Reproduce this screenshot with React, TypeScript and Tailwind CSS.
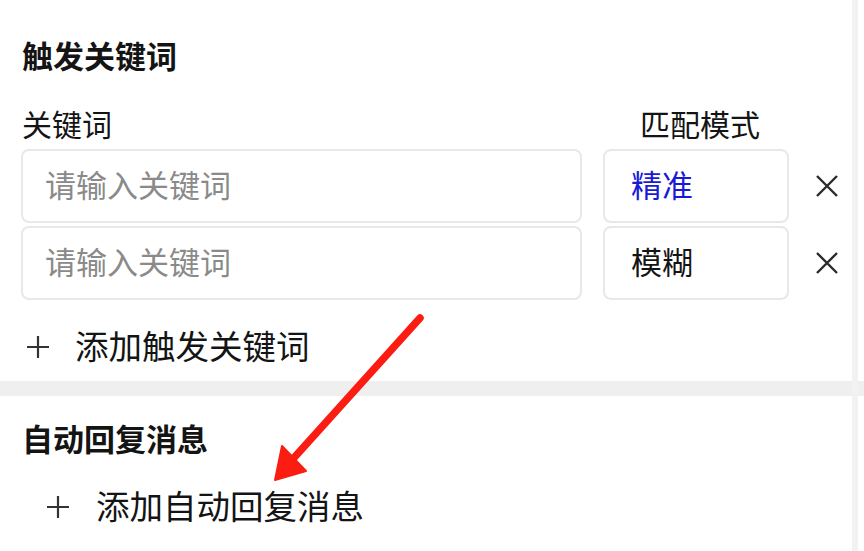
import React from "react";

const font = { fontFamily: '"Noto Sans CJK SC", "Noto Sans", sans-serif' };

function XIcon() {
  return (
    <svg width="24" height="24" viewBox="0 0 24 24" className="shrink-0">
      <path d="M2 2 L22 22 M22 2 L2 22" stroke="#2b2b2b" strokeWidth="2.4" strokeLinecap="butt" />
    </svg>
  );
}

function PlusIcon() {
  return (
    <svg width="24" height="24" viewBox="0 0 24 24" className="shrink-0">
      <path d="M12 1 V23 M1 12 H23" stroke="#333" strokeWidth="2.2" />
    </svg>
  );
}

function Row({ mode, blue }: { mode: string; blue?: boolean }) {
  return (
    <div className="flex items-center h-[74px]">
      <div className="w-[561px] h-full border-2 border-[#e8e8e8] rounded-[8px] flex items-center pl-[22px] pb-[4px] text-[31px] text-[#8a8a8a]">
        请输入关键词
      </div>
      <div
        className={`ml-[21px] w-[186px] h-full border-2 border-[#e8e8e8] rounded-[8px] flex items-center pl-[26px] pb-[4px] text-[31px] ${
          blue ? "text-[#1a1ad6]" : "text-[#141414]"
        }`}
      >
        {mode}
      </div>
      <div className="ml-[26px]">
        <XIcon />
      </div>
    </div>
  );
}

export default function App() {
  return (
    <div className="relative w-[864px] h-[551px] bg-white overflow-hidden text-[#141414]" style={font}>
      <div className="pt-[37px] px-[21px]">
        <h2 className="h-[40px] leading-[36px] text-[31px] font-bold pl-[1px]">触发关键词</h2>
        <div className="mt-[28px] h-[40px] flex items-start text-[30px] leading-[36px]">
          <div className="w-[561px] pl-[1px]">关键词</div>
          <div className="ml-[21px] w-[186px] text-center pl-[8px]">匹配模式</div>
        </div>
        <div className="mt-[4px] flex flex-col gap-[3px]">
          <Row mode="精准" blue />
          <Row mode="模糊" />
        </div>
        <div className="mt-[27px] h-[40px] flex items-center pl-[5px]">
          <PlusIcon />
          <span className="ml-[25px] text-[33.5px] leading-[40px] pb-[4px]">添加触发关键词</span>
        </div>
      </div>
      <div className="mt-[14px] h-[15px] bg-[#efefef]" />
      <div className="px-[21px]">
        <h2 className="mt-[24px] h-[40px] leading-[36px] text-[31px] font-bold pl-[1px]">自动回复消息</h2>
        <div className="mt-[27px] h-[40px] flex items-center pl-[25px]">
          <PlusIcon />
          <span className="ml-[26px] text-[33.5px] leading-[40px] pb-[4px]">添加自动回复消息</span>
        </div>
      </div>
      <div className="absolute top-0 left-[852px] w-[6px] h-full bg-[#f2f2f2]" />
      <svg className="absolute inset-0 pointer-events-none" width="864" height="551" viewBox="0 0 864 551">
        <path d="M420 318 L292 460" stroke="#fb1c12" strokeWidth="7.5" strokeLinecap="round" />
        <path d="M275 480 L282 446 L306 471 Z" fill="#fb1c12" stroke="#fb1c12" strokeWidth="2" strokeLinejoin="round" />
      </svg>
    </div>
  );
}
